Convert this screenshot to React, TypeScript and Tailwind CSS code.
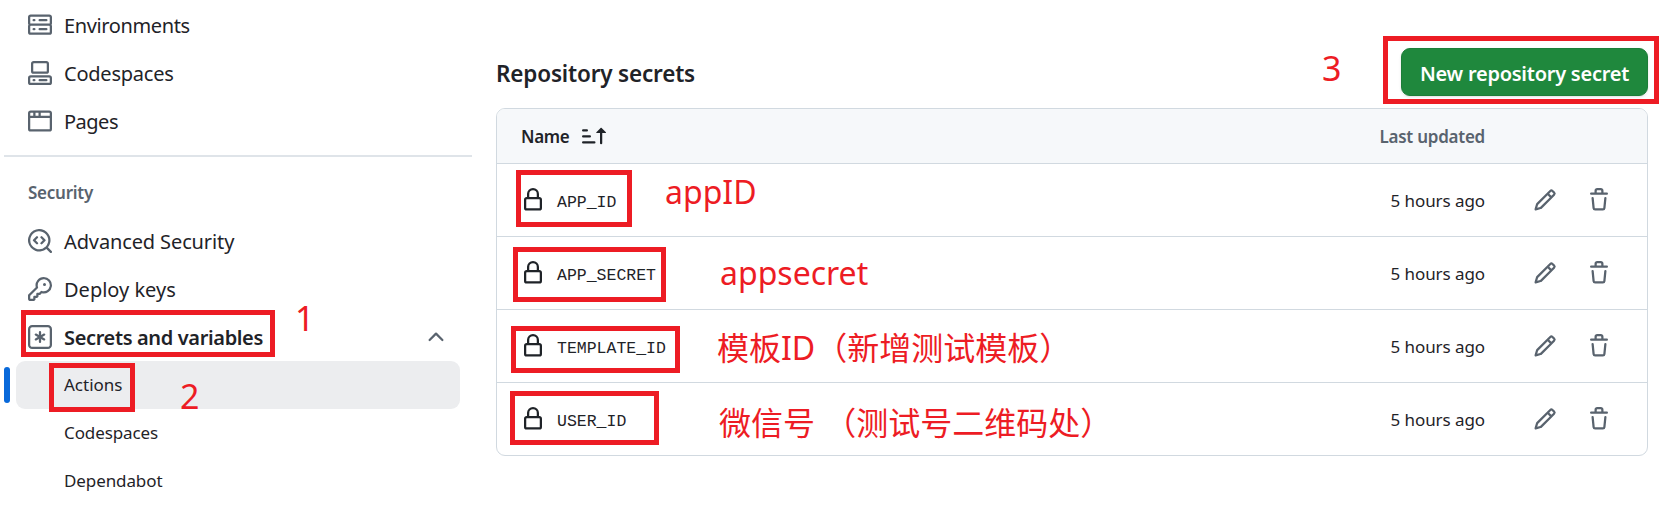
import React from "react";

const paths = {
  server:
    "M1.75 1h12.5c.966 0 1.75.784 1.75 1.75v4c0 .372-.116.717-.314 1 .198.283.314.628.314 1v4a1.75 1.75 0 0 1-1.75 1.75H1.75A1.75 1.75 0 0 1 0 12.75v-4c0-.358.109-.707.314-1a1.739 1.739 0 0 1-.314-1v-4C0 1.784.784 1 1.75 1ZM1.5 2.75v4c0 .138.112.25.25.25h12.5a.25.25 0 0 0 .25-.25v-4a.25.25 0 0 0-.25-.25H1.75a.25.25 0 0 0-.25.25Zm.25 5.75a.25.25 0 0 0-.25.25v4c0 .138.112.25.25.25h12.5a.25.25 0 0 0 .25-.25v-4a.25.25 0 0 0-.25-.25ZM7 4.75A.75.75 0 0 1 7.75 4h4.5a.75.75 0 0 1 0 1.5h-4.5A.75.75 0 0 1 7 4.75ZM7.75 10h4.5a.75.75 0 0 1 0 1.5h-4.5a.75.75 0 0 1 0-1.5ZM3 4.75A.75.75 0 0 1 3.75 4h.5a.75.75 0 0 1 0 1.5h-.5A.75.75 0 0 1 3 4.75ZM3.75 10h.5a.75.75 0 0 1 0 1.5h-.5a.75.75 0 0 1 0-1.5Z",
  codespaces:
    "M0 11.25c0-.966.784-1.75 1.75-1.75h12.5c.966 0 1.75.784 1.75 1.75v3A1.75 1.75 0 0 1 14.25 16H1.75A1.75 1.75 0 0 1 0 14.25Zm2-9.5C2 .784 2.784 0 3.75 0h8.5C13.216 0 14 .784 14 1.75v5a1.75 1.75 0 0 1-1.75 1.75h-8.5A1.75 1.75 0 0 1 2 6.75Zm1.75-.25a.25.25 0 0 0-.25.25v5c0 .138.112.25.25.25h8.5a.25.25 0 0 0 .25-.25v-5a.25.25 0 0 0-.25-.25Zm-2 9.5a.25.25 0 0 0-.25.25v3c0 .138.112.25.25.25h12.5a.25.25 0 0 0 .25-.25v-3a.25.25 0 0 0-.25-.25ZM7 12.75a.75.75 0 0 1 .75-.75h4.5a.75.75 0 0 1 0 1.5h-4.5a.75.75 0 0 1-.75-.75Zm-4 0a.75.75 0 0 1 .75-.75h.5a.75.75 0 0 1 0 1.5h-.5a.75.75 0 0 1-.75-.75Z",
  browser:
    "M0 2.75C0 1.784.784 1 1.75 1h12.5c.966 0 1.75.784 1.75 1.75v10.5A1.75 1.75 0 0 1 14.25 15H1.75A1.75 1.75 0 0 1 0 13.25ZM14.5 6h-13v7.25c0 .138.112.25.25.25h12.5a.25.25 0 0 0 .25-.25Zm-6-3.5v2h6V2.75a.25.25 0 0 0-.25-.25ZM5 2.5v2h2v-2Zm-3.25 0a.25.25 0 0 0-.25.25V4.5h2v-2Z",
  codescan:
    "M8.47 4.97a.75.75 0 0 0 0 1.06L9.94 7.5 8.47 8.97a.75.75 0 1 0 1.06 1.06l2-2a.75.75 0 0 0 0-1.06l-2-2a.75.75 0 0 0-1.06 0ZM6.53 6.03a.75.75 0 0 0-1.06-1.06l-2 2a.75.75 0 0 0 0 1.06l2 2a.75.75 0 1 0 1.06-1.06L5.06 7.5l1.47-1.47ZM12.246 13.307a7.501 7.501 0 1 1 1.06-1.06l2.474 2.473a.749.749 0 1 1-1.06 1.06l-2.474-2.473ZM1.5 7.5a6.002 6.002 0 0 0 3.608 5.504 6.002 6.002 0 0 0 6.486-1.117.748.748 0 0 1 .292-.293A6 6 0 1 0 1.5 7.5Z",
  key: "M10.5 0a5.499 5.499 0 1 1-1.288 10.848l-.932.932a.749.749 0 0 1-.53.22H7v.75a.749.749 0 0 1-.22.53l-.5.5a.749.749 0 0 1-.53.22H5v.75a.749.749 0 0 1-.22.53l-.5.5a.749.749 0 0 1-.53.22h-2A1.75 1.75 0 0 1 0 14.25v-2c0-.199.079-.389.22-.53l4.932-4.932A5.5 5.5 0 0 1 10.5 0Zm-4 5.5c-.001.431.069.86.205 1.269a.75.75 0 0 1-.181.768L1.5 12.56v1.69c0 .138.112.25.25.25h1.69l.06-.06v-1.19a.75.75 0 0 1 .75-.75h1.19l.06-.06v-1.19a.75.75 0 0 1 .75-.75h1.19l1.023-1.025a.75.75 0 0 1 .768-.18A4 4 0 1 0 6.5 5.5ZM11 6a1 1 0 1 1 0-2 1 1 0 0 1 0 2Z",
  asterisk:
    "M0 2.75A2.75 2.75 0 0 1 2.75 0h10.5A2.75 2.75 0 0 1 16 2.75v10.5A2.75 2.75 0 0 1 13.25 16H2.75A2.75 2.75 0 0 1 0 13.25ZM2.75 1.5c-.69 0-1.25.56-1.25 1.25v10.5c0 .69.56 1.25 1.25 1.25h10.5c.69 0 1.25-.56 1.25-1.25V2.75c0-.69-.56-1.25-1.25-1.25ZM8 4a.75.75 0 0 1 .75.75V6.7l1.69-.975a.75.75 0 0 1 .75 1.3L9.5 8l1.69.976a.75.75 0 0 1-.75 1.298L8.75 9.3v1.951a.75.75 0 0 1-1.5 0V9.299l-1.69.976a.75.75 0 0 1-.75-1.3L6.5 8l-1.69-.975a.75.75 0 0 1 .75-1.3l1.69.976V4.75A.75.75 0 0 1 8 4Z",
  chevronUp:
    "M3.22 10.53a.749.749 0 0 1 0-1.06l4.25-4.25a.749.749 0 0 1 1.06 0l4.25 4.25a.749.749 0 1 1-1.06 1.06L8 6.811 4.28 10.53a.749.749 0 0 1-1.06 0Z",
  lock: "M4 4a4 4 0 0 1 8 0v2h.25c.966 0 1.75.784 1.75 1.75v5.5A1.75 1.75 0 0 1 12.25 15h-8.5A1.75 1.75 0 0 1 2 13.25v-5.5C2 6.784 2.784 6 3.75 6H4Zm8.25 3.5h-8.5a.25.25 0 0 0-.25.25v5.5c0 .138.112.25.25.25h8.5a.25.25 0 0 0 .25-.25v-5.5a.25.25 0 0 0-.25-.25ZM10.5 6V4a2.5 2.5 0 1 0-5 0v2Z",
  pencil:
    "M11.013 1.427a1.75 1.75 0 0 1 2.474 0l1.086 1.086a1.75 1.75 0 0 1 0 2.474l-8.61 8.61c-.21.21-.47.364-.756.445l-3.251.93a.75.75 0 0 1-.927-.928l.929-3.25c.081-.286.235-.547.445-.758l8.61-8.61Zm.176 4.823L9.75 4.81l-6.286 6.287a.253.253 0 0 0-.064.108l-.558 1.953 1.953-.558a.253.253 0 0 0 .108-.064Zm1.238-3.763a.25.25 0 0 0-.354 0L10.811 3.75l1.439 1.44 1.263-1.263a.25.25 0 0 0 0-.354Z",
  trash:
    "M11 1.75V3h2.25a.75.75 0 0 1 0 1.5H2.75a.75.75 0 0 1 0-1.5H5V1.75C5 .784 5.784 0 6.75 0h2.5C10.216 0 11 .784 11 1.75ZM4.496 6.675l.66 6.6a.25.25 0 0 0 .249.225h5.19a.25.25 0 0 0 .249-.225l.66-6.6a.75.75 0 0 1 1.492.149l-.66 6.6A1.748 1.748 0 0 1 10.595 15h-5.19a1.75 1.75 0 0 1-1.741-1.575l-.66-6.6a.75.75 0 1 1 1.492-.15ZM6.5 1.75V3h3V1.75a.25.25 0 0 0-.25-.25h-2.5a.25.25 0 0 0-.25.25Z",
  sortAsc:
    "m12.927 2.573 3 3A.25.25 0 0 1 15.75 6H13.5v6.75a.75.75 0 0 1-1.5 0V6H9.75a.25.25 0 0 1-.177-.427l3-3a.25.25 0 0 1 .354 0ZM0 12.25a.75.75 0 0 1 .75-.75h7.5a.75.75 0 0 1 0 1.5H.75a.75.75 0 0 1-.75-.75Zm0-4a.75.75 0 0 1 .75-.75h4.5a.75.75 0 0 1 0 1.5H.75A.75.75 0 0 1 0 8.25Zm0-4a.75.75 0 0 1 .75-.75h2.5a.75.75 0 0 1 0 1.5H.75A.75.75 0 0 1 0 4.25Z",
};

function Icon({ name, className = "text-[#59636e]" }: { name: keyof typeof paths; className?: string }) {
  return (
    <svg viewBox="0 0 16 16" fill="currentColor" aria-hidden="true" className={`size-6 shrink-0 ${className}`}>
      <path fillRule="evenodd" d={paths[name]} />
    </svg>
  );
}

function NavItem({ icon, label, text }: { icon: keyof typeof paths; label: string; text: string }) {
  return (
    <a className="flex h-12 items-center gap-3 pl-7">
      <Icon name={icon} />
      <span className={`pt-px text-[20px] leading-[30px] whitespace-nowrap ${text}`}>{label}</span>
    </a>
  );
}

function Sidebar() {
  return (
    <nav className="w-[476px] shrink-0 pt-px">
      <NavItem icon="server" label="Environments" text="tracking-[-0.38px]" />
      <NavItem icon="codespaces" label="Codespaces" text="tracking-[-0.23px]" />
      <NavItem icon="browser" label="Pages" text="tracking-[-0.5px]" />
      <div className="mt-[10px] ml-1 h-[2px] w-[468px] bg-[#dfe4e9]" />
      <h3 className="mt-[22px] mb-[11px] pl-7 text-[17px] leading-[27px] font-semibold tracking-[-0.25px] text-[#59636e]">
        Security
      </h3>
      <NavItem icon="codescan" label="Advanced Security" text="tracking-[-0.12px]" />
      <NavItem icon="key" label="Deploy keys" text="tracking-normal" />
      <div className="flex items-center justify-between pr-7">
        <NavItem icon="asterisk" label="Secrets and variables" text="font-semibold tracking-[-0.36px]" />
        <Icon name="chevronUp" />
      </div>
      <div className="flex h-12 items-center pl-1">
        <span className="h-9 w-[6px] rounded-[3px] bg-[#0969da]" />
        <a className="ml-[6px] flex h-12 w-[444px] items-center rounded-[9px] bg-[#ecedef] pl-12 text-[17px]">
          Actions
        </a>
      </div>
      <a className="flex h-12 items-center pl-16 text-[17px] tracking-[-0.1px]">Codespaces</a>
      <a className="flex h-12 items-center pl-16 text-[17px] tracking-[-0.1px]">Dependabot</a>
    </nav>
  );
}

const secrets = ["APP_ID", "APP_SECRET", "TEMPLATE_ID", "USER_ID"];

function Secrets() {
  return (
    <main className="ml-5 w-[1152px] shrink-0 pt-12">
      <div className="flex h-12 items-center justify-between">
        <h2 className="pt-[3px] text-[22.5px] leading-9 font-semibold tracking-[-0.18px]">Repository secrets</h2>
        <button className="flex h-12 w-[247px] items-center justify-center rounded-[9px] border border-[#1c7d38] bg-[#1f883d] pt-[3px] text-[20px] font-semibold tracking-[-0.25px] whitespace-nowrap text-white shadow-sm">
          New repository secret
        </button>
      </div>
      <section className="mt-3 overflow-hidden rounded-[9px] border border-[#d1d9e0]">
        <header className="flex h-[54px] items-center bg-[#f6f8fa] pl-6 text-[17px] font-semibold">
          <span className="w-[49px] pt-px tracking-[-0.35px]">Name</span>
          <Icon name="sortAsc" className="ml-3 text-[#1f2328]" />
          <span className="ml-auto pt-px pr-[162px] tracking-[-0.25px] text-[#59636e]">Last updated</span>
        </header>
        {secrets.map((name) => (
          <div key={name} className="flex h-[73px] items-center border-t border-[#d1d9e0] pl-6">
            <Icon name="lock" className="text-[#1f2328]" />
            <code className="ml-3 pt-[6px] font-['Liberation_Mono',monospace] text-[16.5px]">{name}</code>
            <span className="ml-auto pt-px text-[17px] tracking-[-0.08px]">5 hours ago</span>
            <span className="mr-9 ml-12 flex gap-[30px]">
              <Icon name="pencil" />
              <Icon name="trash" />
            </span>
          </div>
        ))}
      </section>
    </main>
  );
}

const frames = [
  "left-[21px] top-[310px] h-[47px] w-[254px]",
  "left-[49px] top-[363px] h-[49px] w-[86px]",
  "left-[516px] top-[170px] h-[57px] w-[116px]",
  "left-[513px] top-[247px] h-[55px] w-[153px]",
  "left-[511px] top-[326px] h-[47px] w-[169px]",
  "left-[510px] top-[391px] h-[54px] w-[149px]",
  "left-[1383px] top-[36px] h-[68px] w-[276px]",
];

const notes = [
  { text: "1", place: "left-[295px] top-[294px] text-[34px]" },
  { text: "2", place: "left-[180px] top-[372px] text-[34px]" },
  { text: "3", place: "left-[1322px] top-[44px] text-[34px]" },
  { text: "appID", place: "left-[665px] top-[168px] text-[32px]" },
  { text: "appsecret", place: "left-[720px] top-[249px] text-[32px]" },
  { text: "模板ID（新增测试模板）", place: "left-[717px] top-[324px] text-[32px]" },
  { text: "微信号 （测试号二维码处）", place: "left-[719px] top-[399px] text-[32px] [word-spacing:1px]" },
];

function Annotations() {
  return (
    <div className="pointer-events-none absolute inset-0">
      {frames.map((f) => (
        <div key={f} className={`absolute border-[5px] border-[#ed1c24] ${f}`} />
      ))}
      {notes.map((n) => (
        <span
          key={n.text}
          className={`absolute font-['Noto_Sans','Noto_Sans_CJK_SC',sans-serif] leading-[48px] whitespace-pre text-[#ed1c24] ${n.place}`}
        >
          {n.text}
        </span>
      ))}
    </div>
  );
}

export default function App() {
  return (
    <div className="relative flex h-[511px] w-[1678px] overflow-hidden bg-white font-['Noto_Sans','Open_Sans',sans-serif] text-[#1f2328]">
      <Sidebar />
      <Secrets />
      <Annotations />
    </div>
  );
}
